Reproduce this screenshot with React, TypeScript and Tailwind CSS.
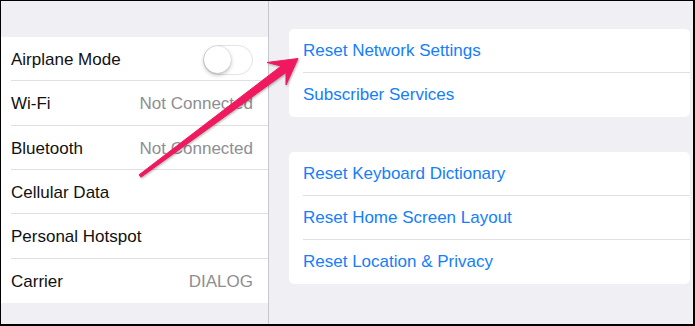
import React from 'react';

const leftRows: { label: string; value?: string; toggle?: boolean }[] = [
  { label: 'Airplane Mode', toggle: true },
  { label: 'Wi-Fi', value: 'Not Connected' },
  { label: 'Bluetooth', value: 'Not Connected' },
  { label: 'Cellular Data' },
  { label: 'Personal Hotspot' },
  { label: 'Carrier', value: 'DIALOG' },
];

const Toggle = () => (
  <div className="relative w-[50px] h-[30px] rounded-full bg-white border-[1.5px] border-[#e3e3e8]">
    <div className="absolute left-0 top-0 w-[27px] h-[27px] rounded-full bg-white shadow-[0_2px_4px_rgba(0,0,0,0.25),0_0_1px_rgba(0,0,0,0.3)]" />
  </div>
);

const Card = ({ items }: { items: string[] }) => (
  <div className="bg-white rounded-[5px] overflow-hidden">
    {items.map((item, i) => (
      <div key={item} className="pl-[14px] h-[44px]">
        <div
          className={
            'h-full flex items-center text-[17px] text-[#147efb] ' +
            (i < items.length - 1 ? 'border-b border-[#e0e0e4]' : '')
          }
        >
          {item}
        </div>
      </div>
    ))}
  </div>
);

// the pink annotation arrow drawn over the screenshot
const Arrow = () => (
  <svg
    className="absolute left-0 top-0 pointer-events-none drop-shadow-[1px_1px_1px_rgba(0,0,0,0.3)]"
    width="695"
    height="326"
    viewBox="0 0 695 326"
  >
    <polygon
      points="298,58.5 286,85 286,72.4 140.9,177.2 139.1,174.8 281.2,66 267,62.5"
      fill="#f0195f"
      stroke="#f0195f"
      strokeWidth="1"
      strokeLinejoin="round"
    />
  </svg>
);

export default function App() {
  return (
    <div className="relative w-[695px] h-[326px] bg-black pt-px pl-px pr-[2px] pb-[2px] font-['Liberation_Sans',Arial,sans-serif]">
      <div className="flex h-full bg-[#efeff4]">
        {/* left settings list */}
        <div className="w-[268px] h-full border-r border-[#c8c7cc] pt-[36px]">
          <div className="bg-white">
            {leftRows.map((row, i) => (
              <div key={row.label} className="pl-[10px] h-[44.33px]">
                <div
                  className={
                    'h-full flex items-center justify-between pr-[15px] pt-[2px] ' +
                    (i < leftRows.length - 1 ? 'border-b border-[#e0e0e4]' : '')
                  }
                >
                  <span className="text-[17px] text-[#111]">{row.label}</span>
                  {row.value && <span className="text-[17px] text-[#8e8e93]">{row.value}</span>}
                  {row.toggle && <Toggle />}
                </div>
              </div>
            ))}
          </div>
        </div>

        {/* right reset options */}
        <div className="flex-1 pl-[20px] pr-[3px] pt-[28px] flex flex-col gap-[35px]">
          <Card items={['Reset Network Settings', 'Subscriber Services']} />
          <Card items={['Reset Keyboard Dictionary', 'Reset Home Screen Layout', 'Reset Location & Privacy']} />
        </div>
      </div>
      <Arrow />
    </div>
  );
}
